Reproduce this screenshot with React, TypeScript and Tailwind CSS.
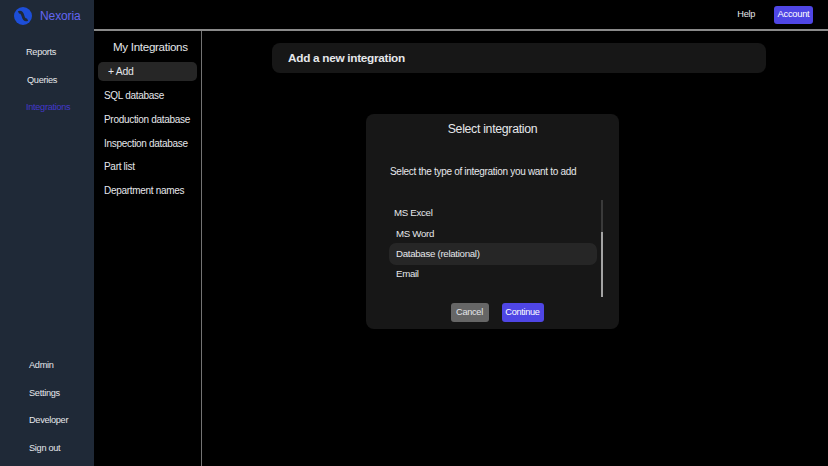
const navTop = [
  { label: "Reports", color: "text-[#e5e7eb]", ml: "ml-[26px]" },
  { label: "Queries", color: "text-[#e5e7eb]", ml: "ml-[27px]" },
  { label: "Integrations", color: "text-[#4338ca]", ml: "ml-[26px]" },
];

const navBottom = ["Admin", "Settings", "Developer", "Sign out"];

const integrations = ["SQL database", "Production database", "Inspection database", "Part list", "Department names"];

function Logo() {
  return (
    <svg width="18" height="18" viewBox="0 0 18 18" fill="none">
      <circle cx="9" cy="9" r="9" fill="#1d4ed8" />
      <path d="M4.5 5.5 C7.5 4 8.5 7.5 9 9 S10.5 14 13.5 12.5" stroke="#1f2937" strokeWidth="2.8" />
    </svg>
  );
}

export default function App() {
  return (
    <div className="flex h-[466px] w-[828px] overflow-hidden bg-black font-['Liberation_Sans',Arial,sans-serif] text-[10px] tracking-[-0.3px] text-[#e5e7eb]">
      <aside className="flex w-[94px] shrink-0 flex-col justify-between bg-[#1f2937] text-[9.2px]">
        <div>
          <div className="flex items-center gap-2 pl-[14px] pt-[7px]">
            <Logo />
            <span className="text-[12px] tracking-[-0.1px] text-[#6366f1]">Nexoria</span>
          </div>
          <nav className="mt-[22px] flex flex-col gap-[16.5px]">
            {navTop.map((item) => (
              <a key={item.label} className={`h-[11px] leading-[11px] ${item.ml} ${item.color}`}>
                {item.label}
              </a>
            ))}
          </nav>
        </div>
        <nav className="mb-[12px] flex flex-col gap-[16.6px] pl-[29px]">
          {navBottom.map((label) => (
            <a key={label} className="h-[11px] leading-[11px]">
              {label}
            </a>
          ))}
        </nav>
      </aside>

      <div className="flex min-w-0 flex-1 flex-col">
        <header className="flex h-[31px] shrink-0 items-center justify-end border-b-2 border-[#8a8a8a] pr-[15px] text-[9.2px]">
          <span className="mr-[19px]">Help</span>
          <button className="h-[18px] w-[39px] rounded-[3px] bg-[#4f46e5] text-[9.4px] text-white">Account</button>
        </header>

        <div className="flex min-h-0 flex-1">
          <section className="w-[108px] shrink-0 border-r border-[#737373] pl-[4px] pr-[4px]">
            <h2 className="mt-[9px] pl-[15px] text-[11.6px] leading-[14px] text-[#e5e7eb]">My Integrations</h2>
            <div className="mt-[8px] flex h-[19px] w-[99px] items-center rounded-[5px] bg-[#262626] pl-[10px] pt-[1px] text-[10.4px] leading-none">
              + Add
            </div>
            <ul className="mt-[8px] flex flex-col gap-[10.75px] pl-[6px] leading-[13px]">
              {integrations.map((name) => (
                <li key={name}>{name}</li>
              ))}
            </ul>
          </section>

          <main className="min-w-0 flex-1">
            <div className="ml-[70px] mt-[12px] flex h-[30px] w-[494px] items-center rounded-[8px] bg-[#171717] pl-[16px] pt-[1px] text-[11.8px] font-bold text-[#e5e7eb]">
              Add a new integration
            </div>

            <div className="ml-[164px] mt-[41px] h-[215px] w-[253px] rounded-[8px] bg-[#171717] px-[24px] pt-[8px]">
              <h3 className="text-center text-[12.3px] leading-[15px]">Select integration</h3>
              <p className="mt-[28px] leading-[13px]">Select the type of integration you want to add</p>

              <div className="relative mt-[22px] h-[97px] text-[9.7px]">
                <div className="pl-[4px] pt-[7px] leading-[12px]">MS Excel</div>
                <div className="mt-[9px] pl-[6px] leading-[12px]">MS Word</div>
                <div className="-mx-[1px] mt-[3px] flex h-[22px] w-[208px] items-center rounded-[7px] bg-[#262626] pl-[7px]">
                  Database (relational)
                </div>
                <div className="mt-[3px] pl-[6px] leading-[12px]">Email</div>
                <div className="absolute left-[211px] top-0 h-[97px] w-[2px] bg-[#3a3a3a]">
                  <div className="mt-[32px] h-[65px] w-[2px] bg-[#a3a3a3]" />
                </div>
              </div>

              <div className="mt-[6px] flex justify-center gap-[13px] pl-[9px]">
                <button className="h-[19px] w-[38px] rounded-[3px] bg-[#666666] text-[9.2px] text-[#e5e7eb]">Cancel</button>
                <button className="h-[19px] w-[42px] rounded-[3px] bg-[#4f46e5] text-[9.2px] text-white">Continue</button>
              </div>
            </div>
          </main>
        </div>
      </div>
    </div>
  );
}
